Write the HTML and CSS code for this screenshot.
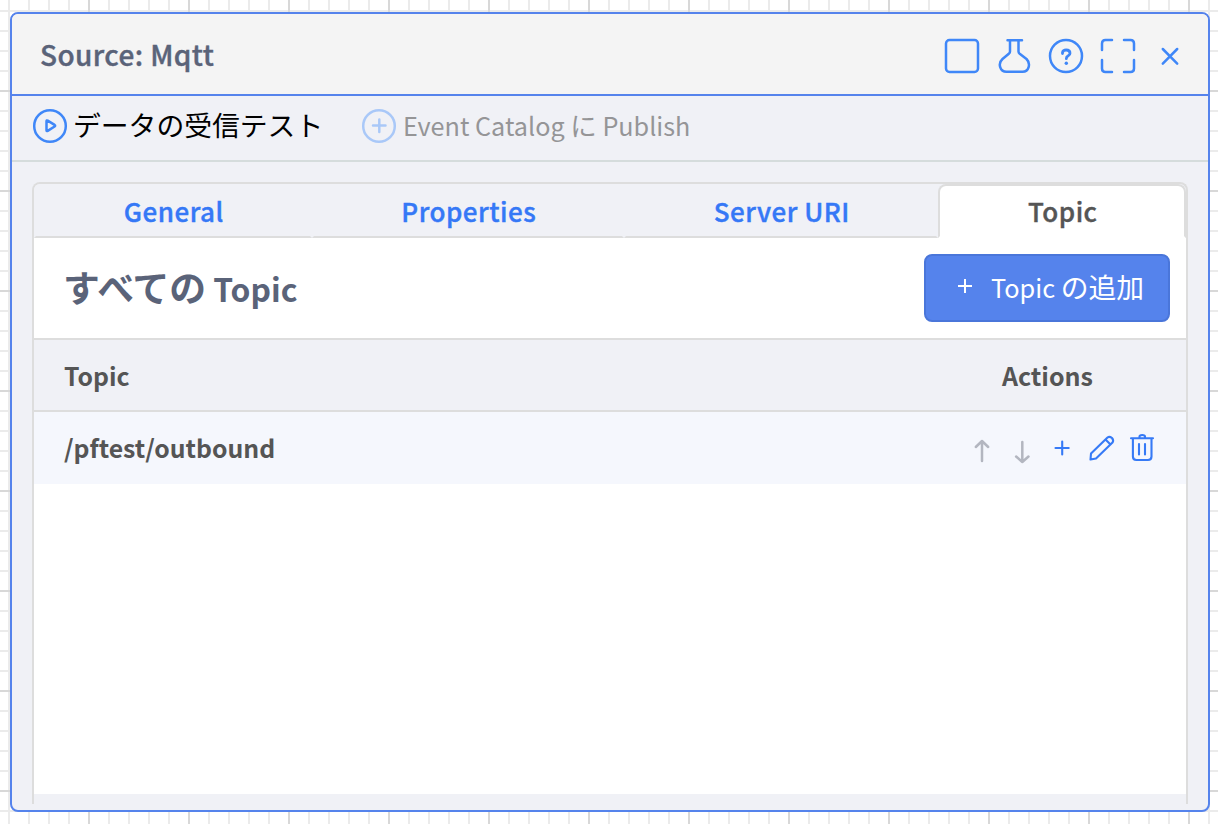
FILE: index.html
```html
<!DOCTYPE html>
<html lang="ja">
<head>
<meta charset="utf-8">
<title>Source: Mqtt</title>
<link rel="stylesheet" href="styles.css">
</head>
<body>
<main class="window">
  <header class="titlebar">
    <h1 class="title">Source: Mqtt</h1>
    <div class="window-tools">
      <svg class="icon" width="36" height="36" viewBox="0 0 36 36"><rect x="2" y="2" width="32" height="32" rx="3.5"/></svg>
      <svg class="icon" width="36" height="36" viewBox="0 0 36 36"><path d="M11.500 2.200H26M14 2.500V13.500Q14 14.800 12.800 15.800L6.500 21C1.500 25.500 4 33.800 10.500 33.800H26.500C33 33.800 35 25.500 30.500 21L23.700 15.800Q22.500 14.800 22.500 13.500V2.500"/></svg>
      <svg class="icon" width="36" height="36" viewBox="0 0 36 36"><circle cx="18" cy="18" r="16"/><path class="bold" d="M14.500 15.500V14.500Q15 12 18.200 12Q22 12 22 15.200Q22 16.800 20.200 17.800Q18.300 18.800 18.300 20.700"/><circle class="dot" cx="18.300" cy="25.200" r="1.700"/></svg>
      <svg class="icon" width="36" height="36" viewBox="0 0 36 36"><path d="M2 12V5.500Q2 2 5.500 2H12M24 2H30.500Q34 2 34 5.500V12M34 22V30.500Q34 34 30.500 34H24M12 34H5.500Q2 34 2 30.500V22"/></svg>
      <svg class="icon" width="36" height="36" viewBox="0 0 36 36"><path d="M10.800 11L25.200 25.600M25.200 11L10.800 25.600"/></svg>
    </div>
  </header>
  <nav class="toolbar">
    <button class="tool">
      <svg class="icon" width="36" height="36" viewBox="0 0 36 36"><circle cx="18" cy="18" r="15.800"/><path d="M14.500 13.200Q14.500 12 15.700 12.600L22.600 16.900Q23.700 17.700 22.600 18.500L15.700 22.900Q14.500 23.500 14.500 22.200Z"/></svg>
      <span class="tool-ja">データの受信テスト</span>
    </button>
    <button class="tool tool-disabled" disabled>
      <svg class="icon" width="36" height="36" viewBox="0 0 36 36"><circle cx="18" cy="18" r="15.800"/><path d="M12 17.600H24.500M18.300 11.500V24"/></svg>
      <span class="tool-en">Event Catalog <span class="kana">に</span> Publish</span>
    </button>
  </nav>
  <section class="panel">
    <div class="tabs">
      <a class="tab">General</a>
      <a class="tab">Properties</a>
      <a class="tab">Server URI</a>
      <a class="tab tab-active">Topic</a>
    </div>
    <div class="heading-row">
      <h2 class="heading"><span class="heading-ja">すべての</span> Topic</h2>
      <button class="add">
        <svg class="add-icon" width="16" height="16" viewBox="0 0 16 16"><path d="M1 8H15M8 1V15"/></svg>
        <span class="add-label">Topic <span class="add-ja">の追加</span></span>
      </button>
    </div>
    <div class="row row-head">
      <span>Topic</span>
      <span class="actions-title">Actions</span>
    </div>
    <div class="row row-item">
      <span class="topic-name">/pftest/outbound</span>
      <div class="actions">
        <svg class="icon muted" width="32" height="32" viewBox="0 0 32 32"><path d="M16 29V9M9.800 15L16 9L22.200 15"/></svg>
        <svg class="icon muted" width="32" height="32" viewBox="0 0 32 32"><path d="M16.300 10V30M10.100 24.500L16.300 30L22.500 24.500"/></svg>
        <svg class="icon thin" width="32" height="32" viewBox="0 0 32 32"><path d="M9.500 16H22.700M16.200 9.500V22.500"/></svg>
        <svg class="icon thin" width="32" height="32" viewBox="0 0 32 32"><path d="M5 21.500L21.500 5.500Q23.500 4 26 6Q28 8.500 26.500 10.500L10 26.500L4.500 27.500ZM19.500 7.500L24.500 12.500"/></svg>
        <svg class="icon thin" width="32" height="32" viewBox="0 0 32 32"><path d="M5 6.200H27M13.500 6V4.500Q13.500 3 16.200 3Q19 3 19 4.500V6M6.900 6.500V24.500Q6.900 28 10.400 28H22Q25.500 28 25.500 24.500V6.500M13 12V22.500M19 12V22.500"/></svg>
      </div>
    </div>
    <div class="panel-body"></div>
    <div class="panel-foot"></div>
  </section>
</main>
</body>
</html>
```
FILE: styles.css
```css
* { box-sizing: border-box; }
body {
  margin: 0;
  height: 824px;
  padding: 12px 8px 12px 10px;
  overflow: hidden;
  font-family: "Noto Sans CJK JP", sans-serif;
  background-color: #fff;
  background-image:
    linear-gradient(90deg, #d8d8d8 2px, transparent 2px),
    linear-gradient(#d8d8d8 2px, transparent 2px),
    linear-gradient(90deg, #ebebeb 2px, transparent 2px),
    linear-gradient(#ebebeb 2px, transparent 2px);
  background-size: 100px 100px, 100px 100px, 20px 20px, 20px 20px;
  background-position: 88px 0, 0 90px, 8px 0, 0 10px;
}
h1, h2 { margin: 0; }
button { border: 0; padding: 0; background: none; font-family: inherit; white-space: nowrap; }
.window {
  width: 1200px;
  height: 800px;
  border: 2px solid #5583ec;
  border-radius: 8px;
  background: #f0f1f6;
  overflow: hidden;
}
.titlebar {
  height: 82px;
  display: flex;
  justify-content: space-between;
  align-items: center;
  padding: 0 20px 0 28px;
  background: #f4f4f4;
  border-bottom: 2px solid #5583ec;
}
.title {
  font-size: 28px;
  font-weight: 500;
  line-height: 80px;
  letter-spacing: 0.4px;
  color: #5a6379;
  -webkit-text-stroke: 0.4px #5a6379;
}
.window-tools { display: flex; gap: 16px; padding-top: 4px; }
.icon {
  display: block;
  flex: none;
  fill: none;
  stroke: #3f87f8;
  stroke-width: 2.5;
  stroke-linecap: round;
  stroke-linejoin: round;
}
.bold { stroke-width: 2.8; }
.dot { fill: #3f87f8; stroke: none; }
.thin { stroke-width: 2.1; stroke: #367af6; }
.muted { stroke: #b3b6c0; }
.toolbar {
  height: 66px;
  display: flex;
  gap: 40px;
  padding: 0 20px 4px;
  border-bottom: 2px solid #d5dcdc;
}
.tool { display: flex; align-items: center; gap: 6px; color: #000; }
.tool-ja { width: 248px; margin-left: -1px; padding-bottom: 4px; font-size: 27.8px; line-height: 40px; }
.tool-en { padding-bottom: 2px; font-size: 25.2px; line-height: 40px; }
.tool-disabled { color: #959597; }
.tool-disabled .icon { stroke: #a9c8f8; }
.kana { font-size: 26.5px; }
.panel {
  width: 1156px;
  height: 622px;
  margin: 20px 0 0 20px;
  border: 2px solid #ddd;
  border-bottom: 0;
  border-radius: 8px 8px 0 0;
  display: flex;
  flex-direction: column;
  overflow: hidden;
}
.tabs { display: grid; grid-template-columns: 278px 312px 314px 248px; height: 54px; }
.tab {
  height: 54px;
  padding-left: 1.5px;
  border: 2px solid #f0f1f6;
  border-bottom-color: #ddd;
  color: #3578f6;
  font-size: 26px;
  font-weight: 500;
  line-height: 50px;
  letter-spacing: 0.5px;
  text-align: center;
  -webkit-text-stroke: 0.4px currentColor;
}
.tab-active {
  background: #fff;
  border-color: #ddd;
  border-bottom-color: #fff;
  border-radius: 8px 8px 0 0;
  color: #555;
}
.heading-row {
  height: 102px;
  display: flex;
  align-items: center;
  justify-content: space-between;
  padding: 0 16px 0 29px;
  background: #fff;
  border-bottom: 2px solid #ddd;
}
.heading { padding-bottom: 3px; font-size: 31.8px; line-height: 60px; color: #5a6379; }
.heading-ja { font-size: 36.8px; }
.add {
  width: 246px;
  height: 68px;
  display: flex;
  align-items: center;
  justify-content: center;
  gap: 18px;
  padding: 0 0 4px 7px;
  border: 2px solid #4a76da;
  border-radius: 8px;
  background: #5583ec;
  color: #fff;
}
.add-icon { fill: none; stroke: #fff; stroke-width: 2; }
.add-label { font-size: 25.3px; line-height: 40px; }
.add-ja { font-size: 27.8px; }
.row {
  display: flex;
  align-items: center;
  justify-content: space-between;
  padding: 0 28px 0 30px;
  font-size: 24.8px;
  font-weight: 700;
  color: #555;
}
.row-head { height: 72px; border-bottom: 2px solid #ddd; }
.actions-title { padding-right: 65px; font-size: 25px; }
.row-item { height: 72px; background: #f5f7fd; }
.topic-name { padding-bottom: 2px; }
.actions { display: flex; gap: 8px; }
.panel-body { flex: 1; background: #fff; }
.panel-foot { height: 10px; }
```
